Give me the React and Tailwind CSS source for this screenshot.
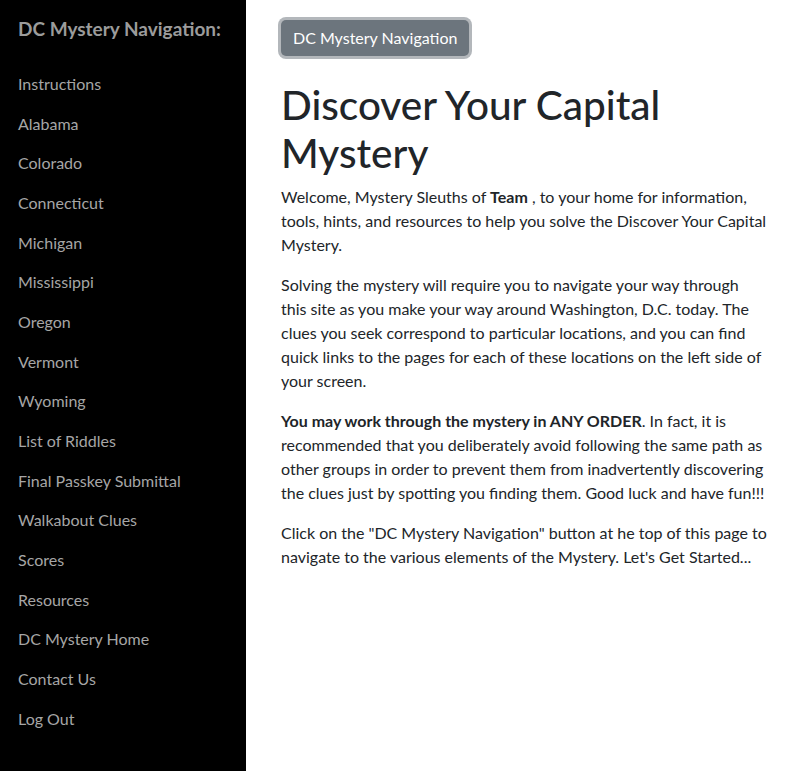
import React from 'react';

const links = [
    'Instructions',
    'Alabama',
    'Colorado',
    'Connecticut',
    'Michigan',
    'Mississippi',
    'Oregon',
    'Vermont',
    'Wyoming',
    'List of Riddles',
    'Final Passkey Submittal',
    'Walkabout Clues',
    'Scores',
    'Resources',
    'DC Mystery Home',
    'Contact Us',
    'Log Out',
];

function Sidebar() {
    return (
        <aside className="w-[246px] shrink-0 bg-black min-h-[771px] px-[18px] pt-[16px]">
            <h2 className="text-[19px] font-bold text-[#9b9b9b] leading-[26px] mb-[22px]">DC Mystery Navigation:</h2>
            <nav className="flex flex-col">
                {links.map((l) => (
                    <a key={l} href="#" className="text-[16px] leading-[24px] text-[#a6a6a6] py-[7.85px]">
                        {l}
                    </a>
                ))}
            </nav>
        </aside>
    );
}

function App() {
    return (
        <div className="flex min-h-[771px] bg-white" style={{ fontFamily: 'Lato, "Open Sans", sans-serif' }}>
            <Sidebar />
            <main className="flex-1 pl-[35px] pt-[20px] text-[#212529]">
                <div className="w-[486px]">
                    <button className="bg-[#6c757d] text-white text-[16px] leading-[24px] px-[12px] py-[6px] rounded-[5px] ring-[3px] ring-[#b3b7bb]">
                        DC Mystery Navigation
                    </button>
                    <h1 className="mt-[25px] text-[40.5px] leading-[48px] font-medium mb-[8px]">Discover Your Capital Mystery</h1>
                    <p className="text-[16px] leading-[24px] mb-[16px]">
                        Welcome, Mystery Sleuths of <b>Team</b> , to your home for information, tools, hints, and resources to help you solve the Discover Your Capital Mystery.
                    </p>
                    <p className="text-[16px] leading-[24px] mb-[16px]">
                        Solving the mystery will require you to navigate your way through this site as you make your way around Washington, D.C. today. The clues you seek correspond to particular locations, and you can find quick links to the pages for each of these locations on the left side of your screen.
                    </p>
                    <p className="text-[16px] leading-[24px] mb-[16px]">
                        <b>You may work through the mystery in ANY ORDER</b>. In fact, it is recommended that you deliberately avoid following the same path as other groups in order to prevent them from inadvertently discovering the clues just by spotting you finding them. Good luck and have fun!!!
                    </p>
                    <p className="text-[16px] leading-[24px] mb-[16px]">
                        Click on the "DC Mystery Navigation" button at he top of this page to navigate to the various elements of the Mystery. Let's Get Started...
                    </p>
                </div>
            </main>
        </div>
    );
}

export default App;
